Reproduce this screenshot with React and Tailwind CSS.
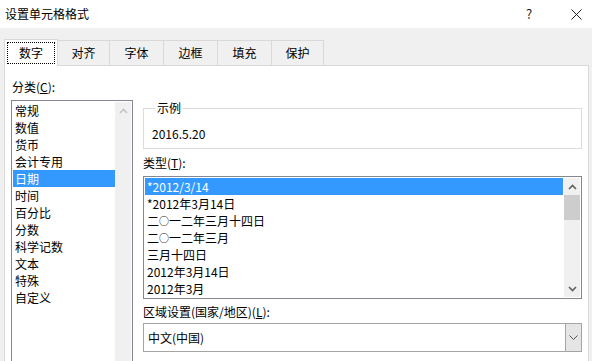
const font = { fontFamily: '"Microsoft YaHei UI", "Noto Sans CJK SC", sans-serif' };

const categories = ['常规', '数值', '货币', '会计专用', '日期', '时间', '百分比', '分数', '科学记数', '文本', '特殊', '自定义'];
const types = ['*2012/3/14', '*2012年3月14日', '二○一二年三月十四日', '二○一二年三月', '三月十四日', '2012年3月14日', '2012年3月'];
const tabs = [
  { label: '对齐', w: 'w-[52px]' },
  { label: '字体', w: 'w-[54px]' },
  { label: '边框', w: 'w-[54px]' },
  { label: '填充', w: 'w-[54px]' },
  { label: '保护', w: 'w-[52px]' },
];

function Chevron({ up, color }) {
  return (
    <svg width="9" height="6" viewBox="0 0 9 6">
      <path d={up ? 'M1 5L4.5 1.5L8 5' : 'M1 1L4.5 4.5L8 1'} fill="none" stroke={color} strokeWidth="1.6" />
    </svg>
  );
}

// the small circle in 二○一二 is narrower than a full CJK glyph
function TypeText({ text }) {
  return text.split('○').map((part, i) => (
    <span key={i}>
      {i > 0 && <span className="text-[10px] align-[1px]">○</span>}
      {part}
    </span>
  ));
}

export default function App() {
  return (
    <div className="w-[592px] h-[361px] overflow-hidden bg-[#f0f0f0] text-[12px] leading-[16px] text-black" style={font}>
      {/* title bar */}
      <div className="h-[28px] bg-white flex items-center pl-[5px]">
        <span className="flex-1">设置单元格格式</span>
        <span className="w-[20px] text-center text-[13px] text-[#222]">?</span>
        <span className="ml-[27px] mr-[6px] w-[20px] flex justify-center">
          <svg width="11" height="11" viewBox="0 0 11 11">
            <path d="M0.5 0.5L10.5 10.5M10.5 0.5L0.5 10.5" stroke="#222" strokeWidth="1" />
          </svg>
        </span>
      </div>

      <div className="pl-[4px] pt-[10px]">
        {/* tabs */}
        <div className="flex items-end h-[27px]">
          <div className="relative z-10 w-[54px] h-[27px] bg-white border border-b-0 border-[#d9d9d9] -mb-[1px] p-[2px]">
            <div className="h-full border border-dotted border-black flex items-center justify-center">数字</div>
          </div>
          {tabs.map((t) => (
            <div key={t.label} className={`${t.w} h-[25px] border border-l-0 border-b-0 border-[#d9d9d9] flex items-center justify-center`}>
              {t.label}
            </div>
          ))}
        </div>

        {/* panel */}
        <div className="w-[585px] h-[300px] bg-white border border-[#d9d9d9] flex pl-[6px] pt-[13px]">
          {/* left column */}
          <div className="w-[122px] flex flex-col">
            <div className="pl-[1px]">分类(<span className="underline">C</span>):</div>
            <div className="mt-[5px] flex-1 border border-[#828790] p-[1px] flex">
              <div className="flex-1">
                {categories.map((c) => (
                  <div key={c} className={`h-[17px] leading-[17px] pl-[2px] ${c === '日期' ? 'bg-[#3399ff] text-white' : ''}`}>
                    {c}
                  </div>
                ))}
              </div>
              <div className="w-[16px] bg-[#f0f0f0] flex justify-center pt-[6px]">
                <Chevron up color="#c4c4c4" />
              </div>
            </div>
          </div>

          {/* right column */}
          <div className="ml-[10px] w-[439px] flex flex-col">
            <fieldset className="border border-[#dcdcdc] pl-[8px] pt-[10px] pb-[6px] mt-[21px]">
              <legend className="ml-[3px] px-[2px]">示例</legend>
              <div>2016.5.20</div>
            </fieldset>

            <div className="mt-[6px]">类型(<span className="underline">T</span>):</div>
            <div className="mt-[5px] h-[123px] border border-[#828790] p-[1px] flex">
              <div className="flex-1">
                {types.map((t, i) => (
                  <div key={t} className={`h-[17px] leading-[17px] pl-[2px] ${i === 0 ? 'bg-[#3399ff] text-white' : ''}`}>
                    <TypeText text={t} />
                  </div>
                ))}
              </div>
              <div className="w-[16px] ml-[1px] bg-[#f0f0f0] flex flex-col items-center">
                <div className="h-[17px] flex items-center">
                  <Chevron up color="#606060" />
                </div>
                <div className="w-full h-[25px] bg-[#cdcdcd]" />
                <div className="flex-1" />
                <div className="h-[17px] flex items-center">
                  <Chevron color="#606060" />
                </div>
              </div>
            </div>

            <div className="mt-[5px]">区域设置(国家/地区)(<span className="underline">L</span>):</div>
            <div className="mt-[3px] h-[29px] border border-[#a5a5a5] flex">
              <div className="flex-1 flex items-center pl-[4px]">中文(中国)</div>
              <div className="w-[16px] bg-[#e5e5e5] border-l border-[#a5a5a5] flex items-center justify-center">
                <svg width="9" height="5" viewBox="0 0 9 5">
                  <path d="M0.5 0.5L4.5 4.5L8.5 0.5" fill="none" stroke="#555" strokeWidth="1" />
                </svg>
              </div>
            </div>
          </div>
        </div>
      </div>
    </div>
  );
}
